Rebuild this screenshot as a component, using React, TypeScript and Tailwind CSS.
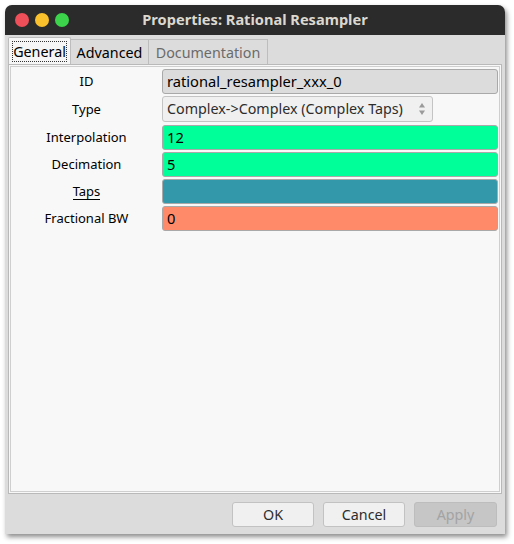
import React from 'react';

const font = { fontFamily: '"Noto Sans", "Open Sans", sans-serif' };

const rows = [
  { label: 'ID', value: 'rational_resampler_xxx_0', bg: 'bg-[#dcdcdc]', kind: 'id' },
  { label: 'Type', value: 'Complex->Complex (Complex Taps)', bg: 'bg-[#f0f0f0]', kind: 'combo' },
  { label: 'Interpolation', value: '12', bg: 'bg-[#00ff99]', kind: 'field' },
  { label: 'Decimation', value: '5', bg: 'bg-[#00ff99]', kind: 'field' },
  { label: 'Taps', value: '', bg: 'bg-[#3399aa]', kind: 'taps' },
  { label: 'Fractional BW', value: '0', bg: 'bg-[#ff8a69]', kind: 'field' },
];

const App: React.FC = () => {
  return (
    <div className="w-[514px] h-[544px] bg-white pl-[5px] pt-[5px]" style={font}>
      <div className="w-[500px] h-[529px] flex flex-col bg-[#dcdcdc] rounded-t-[7px] shadow-[2px_3px_5px_rgba(0,0,0,0.45)]">
        {/* Title bar */}
        <div className="relative h-[30px] bg-[#2b2b2b] rounded-t-[7px] flex items-center justify-center">
          <div className="absolute left-[10px] top-[8px] flex gap-[6px]">
            <span className="w-[14px] h-[14px] rounded-full bg-[#ee4f58]" />
            <span className="w-[14px] h-[14px] rounded-full bg-[#fbc12d]" />
            <span className="w-[14px] h-[14px] rounded-full bg-[#3bd44b]" />
          </div>
          <span className="text-[14.6px] font-bold text-[#dcd8cf]">Properties: Rational Resampler</span>
        </div>

        {/* Tabs */}
        <div className="flex items-end h-[29px] pl-[3px] text-[14.3px]">
          <div className="h-[27px] w-[63px] px-[3px] pt-[3px] bg-[#f6f6f6] border border-b-0 border-[#bdbdbd] rounded-t-[2px]">
            <div className="h-[21px] border border-dotted border-[#333] flex items-center justify-center text-black pt-px">General</div>
          </div>
          <div className="h-[25px] w-[78px] bg-[#dcdcdc] border border-b-0 border-l-0 border-[#bdbdbd] flex items-center justify-center text-black pt-px">Advanced</div>
          <div className="h-[25px] w-[119px] bg-[#dcdcdc] border border-b-0 border-l-0 border-[#bdbdbd] flex items-center justify-center text-[#6b6b6b] pt-px">Documentation</div>
        </div>

        {/* Panel */}
        <div className="mx-[3px] h-[430px] border border-[#b9b9b9] p-px bg-[#f8f8f8]">
          <div className="h-full border border-[#cfcfcf] bg-[#f8f8f8] pt-[2px] pr-[1px] flex flex-col gap-[2px]">
            {rows.map((r) => (
              <div key={r.label} className={`flex ${r.kind === 'combo' ? 'h-[27px] items-start' : 'h-[25px] items-center'}`}>
                <div className="w-[151px] shrink-0 text-center text-[13px] text-black self-center">
                  <span className={r.kind === 'taps' ? 'border-b border-black leading-[15px] inline-block' : ''}>{r.label}</span>
                </div>
                {r.kind === 'combo' ? (
                  <div className={`w-[271px] h-[26px] ${r.bg} border border-[#c4c4c4] rounded-[3px] flex items-center justify-between px-[4px] text-[14.3px] text-[#2d2d2d]`}>
                    <span>{r.value}</span>
                    <svg width="8" height="14" viewBox="0 0 8 14" className="mr-[2px]">
                      <path d="M4 1 L7 5.5 L1 5.5 Z" fill="#9a9a9a" />
                      <path d="M4 13 L7 8.5 L1 8.5 Z" fill="#9a9a9a" />
                    </svg>
                  </div>
                ) : (
                  <div className={`flex-1 h-[25px] ${r.bg} border border-[#a9a9a9] rounded-[3px] flex items-center px-[4px] text-[14.7px] text-black`}>
                    {r.value}
                  </div>
                )}
              </div>
            ))}
          </div>
        </div>

        {/* Buttons */}
        <div className="flex justify-end gap-[9px] pr-[8px] pt-[8px] text-[14.3px]">
          <div className="w-[82px] h-[25px] bg-[#f0f0f0] border border-[#c2c2c2] rounded-[3px] flex items-center justify-center text-[#2d2d2d]">OK</div>
          <div className="w-[82px] h-[25px] bg-[#f0f0f0] border border-[#c2c2c2] rounded-[3px] flex items-center justify-center text-[#2d2d2d]">Cancel</div>
          <div className="w-[83px] h-[25px] bg-[#c6c6c6] border border-[#bdbdbd] rounded-[3px] flex items-center justify-center text-[#a3a3a3]">Apply</div>
        </div>
      </div>
    </div>
  );
};

export default App;
